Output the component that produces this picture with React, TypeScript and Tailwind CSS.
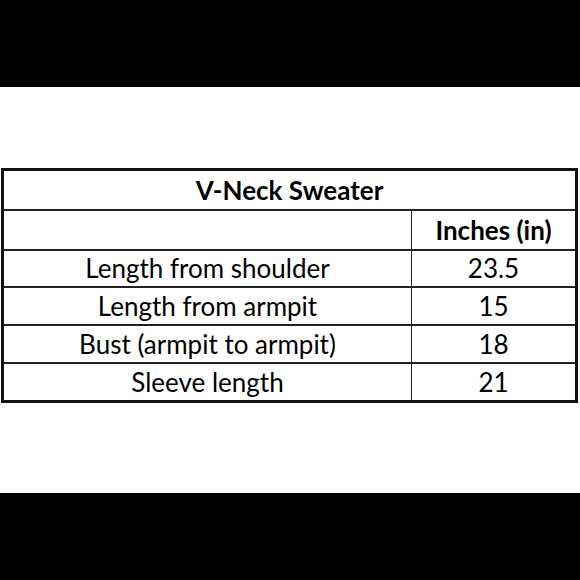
const rows = [
  { label: 'Length from shoulder', value: '23.5', h: 'h-[37px]' },
  { label: 'Length from armpit', value: '15', h: 'h-[38px]' },
  { label: 'Bust (armpit to armpit)', value: '18', h: 'h-[38px]' },
  { label: 'Sleeve length', value: '21', h: 'h-[36px]' },
]

export default function App() {
  return (
    <div className="flex h-[580px] w-[580px] flex-col bg-white font-['Lato','Open_Sans',sans-serif] text-black">
      <div className="h-[87px] shrink-0 bg-black" />

      <div className="flex-1 px-[1px] pt-[81px]">
        <div className="w-[577px] border-[3px] border-[#111]">
          <div className="flex h-[40px] items-center justify-center border-b-2 border-[#222] text-[26px] font-bold">
            V-Neck Sweater
          </div>
          <div className="flex h-[40px] border-b-2 border-[#222]">
            <div className="w-[408px] border-r-[1.5px] border-[#222]" />
            <div className="flex flex-1 items-center justify-center text-[26px] font-bold">
              Inches (in)
            </div>
          </div>
          {rows.map((row, i) => (
            <div
              key={row.label}
              className={`flex ${row.h} ${i < rows.length - 1 ? 'border-b-2 border-[#222]' : ''}`}
            >
              <div className="flex w-[408px] items-center justify-center border-r-[1.5px] border-[#222] text-[26px]">
                {row.label}
              </div>
              <div className="flex flex-1 items-center justify-center text-[26px]">
                {row.value}
              </div>
            </div>
          ))}
        </div>
      </div>

      <div className="h-[87px] shrink-0 bg-black" />
    </div>
  )
}
